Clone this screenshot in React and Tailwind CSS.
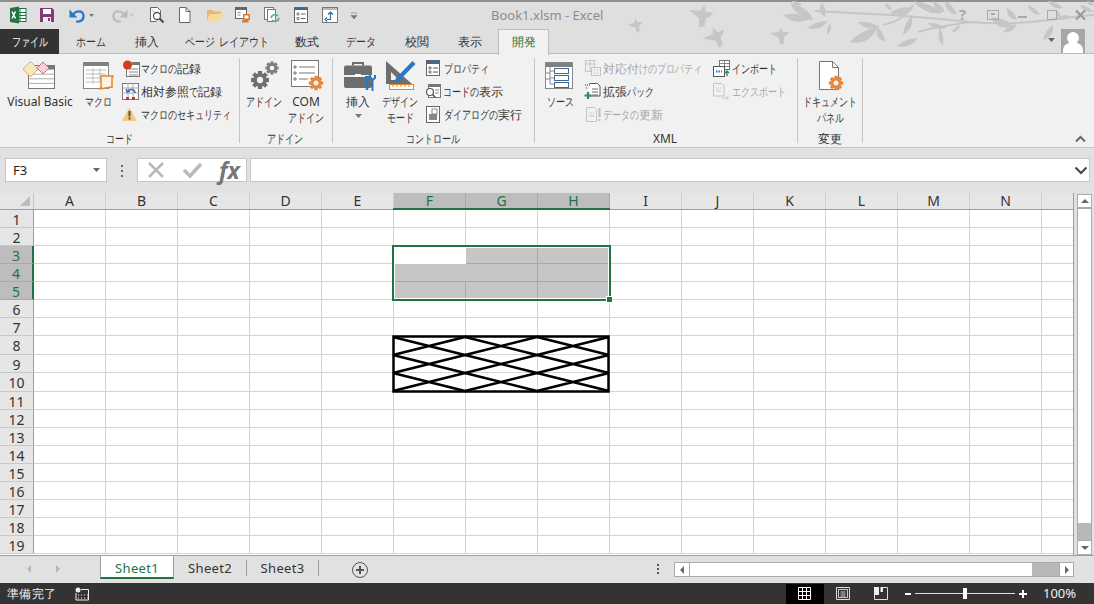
const jp = "font-['Noto_Sans_CJK_JP','Liberation_Sans',sans-serif]";
const columns = ['A', 'B', 'C', 'D', 'E', 'F', 'G', 'H', 'I', 'J', 'K', 'L', 'M', 'N', ''];
const rows = Array.from({ length: 19 }, (_, i) => i + 1);

const tabs = [
  { label: 'ホーム', pos: 'left-[59px] w-[64px]' },
  { label: '挿入', pos: 'left-[123px] w-[48px]' },
  { label: 'ページ レイアウト', pos: 'left-[171px] w-[112px]' },
  { label: '数式', pos: 'left-[283px] w-[48px]' },
  { label: 'データ', pos: 'left-[331px] w-[60px]' },
  { label: '校閲', pos: 'left-[393px] w-[48px]' },
  { label: '表示', pos: 'left-[446px] w-[48px]' },
];

const labels = [
  { t: 'Visual Basic', c: 'left-0 w-[80px] top-[94px] text-center font-["Open_Sans"]' },
  { t: 'マクロ', c: 'left-[78px] w-[40px] top-[94px] text-center' },
  { t: 'マクロの記録', c: 'left-[141px] top-[61px]' },
  { t: '相対参照で記録', c: 'left-[141px] top-[84px]' },
  { t: 'マクロのセキュリティ', c: 'left-[141px] top-[107px]' },
  { t: 'コード', c: 'left-[90px] w-[58px] top-[131px] text-center' },
  { t: 'アドイン', c: 'left-[240px] w-[48px] top-[94px] text-center' },
  { t: 'COM', c: 'left-[286px] w-[40px] top-[94px] text-center font-["Open_Sans"]' },
  { t: 'アドイン', c: 'left-[282px] w-[48px] top-[110px] text-center' },
  { t: 'アドイン', c: 'left-[261px] w-[48px] top-[131px] text-center' },
  { t: '挿入', c: 'left-[338px] w-[40px] top-[94px] text-center' },
  { t: 'デザイン', c: 'left-[376px] w-[48px] top-[94px] text-center' },
  { t: 'モード', c: 'left-[376px] w-[48px] top-[110px] text-center' },
  { t: 'プロパティ', c: 'left-[444px] top-[61px]' },
  { t: 'コードの表示', c: 'left-[443px] top-[84px]' },
  { t: 'ダイアログの実行', c: 'left-[444px] top-[107px]' },
  { t: 'コントロール', c: 'left-[393px] w-[80px] top-[131px] text-center' },
  { t: 'ソース', c: 'left-[540px] w-[40px] top-[94px] text-center' },
  { t: '対応付けのプロパティ', c: 'left-[603px] top-[61px] text-[#a6a6a6]' },
  { t: '拡張パック', c: 'left-[603px] top-[84px]' },
  { t: 'データの更新', c: 'left-[603px] top-[107px] text-[#a6a6a6]' },
  { t: 'XML', c: 'left-[645px] w-[40px] top-[131px] text-center font-["Open_Sans"]' },
  { t: 'インポート', c: 'left-[732px] top-[61px]' },
  { t: 'エクスポート', c: 'left-[732px] top-[84px] text-[#a6a6a6]' },
  { t: 'ドキュメント', c: 'left-[800px] w-[60px] top-[94px] text-center' },
  { t: 'パネル', c: 'left-[810px] w-[40px] top-[110px] text-center' },
  { t: '変更', c: 'left-[810px] w-[40px] top-[131px] text-center' },
];

const separators = ['left-[239px]', 'left-[332px]', 'left-[534px]', 'left-[797px]', 'left-[862px]'];

// tip to tip leaves: x1, y1, x2, y2, belly
const leaves = [
  [783, 15, 812, 18, 7], [790, 3, 810, 15, 6], [801, 7, 813, 20, 5], [822, 3, 825, 17, 5], [807, 28, 828, 21, 5],
  [827, 35, 830, 23, 3], [792, 1, 802, 5, 3], [885, 3, 892, 10, 3], [890, 13, 913, 8, 7], [903, 35, 912, 15, 5],
  [913, 1, 943, 13, 6], [933, 1, 945, 12, 5], [945, 1, 957, 15, 5], [927, 23, 947, 28, 4], [850, 42, 877, 28, 8],
  [858, 22, 880, 27, 5], [877, 27, 885, 42, 5], [897, 46, 918, 38, 5], [940, 28, 943, 46, 4], [952, 32, 960, 25, 3],
  [990, 17, 1015, 27, 7], [1007, 8, 1017, 20, 5], [1003, 32, 1017, 24, 4], [1028, 5, 1040, 15, 4], [1048, 1, 1063, 8, 4],
  [1043, 40, 1053, 25, 5], [1055, 18, 1070, 16, 4], [1080, 5, 1094, 12, 4], [1087, 1, 1094, 5, 3], [1057, 10, 1060, 18, 3],
];

function leafPath([x1, y1, x2, y2, b]) {
  const mx = (x1 + x2) / 2;
  const my = (y1 + y2) / 2;
  const len = Math.hypot(x2 - x1, y2 - y1);
  const nx = (-(y2 - y1) / len) * b * 1.5;
  const ny = ((x2 - x1) / len) * b * 1.5;
  return `M${x1} ${y1}Q${mx + nx} ${my + ny} ${x2} ${y2}Q${mx - nx * 0.5} ${my - ny * 0.5} ${x1} ${y1}z`;
}

// kana in the reference is much narrower than the kanji, so squeeze those runs
function Jp({ text, wide }) {
  const parts = text.split(/([\u3040-\u30ff]+)/);
  return parts.map((part, i) => {
    if (i % 2 === 0) return part;
    return (
      <span
        key={i}
        style={{ width: part.length * (wide ? 10 : 9) }}
        className={`inline-block origin-left whitespace-nowrap ${wide ? 'scale-x-[.83]' : 'scale-x-75'}`}
      >
        {part}
      </span>
    );
  });
}

function Gear({ x, y, r, fill = '#e8873a' }) {
  const teeth = [0, 45, 90, 135];
  return (
    <g transform={`translate(${x} ${y})`} fill={fill}>
      {teeth.map(a => (
        <rect key={a} x={-r * 0.28} y={-r * 1.2} width={r * 0.56} height={r * 2.4} transform={`rotate(${a})`} />
      ))}
      <circle r={r * 0.9} />
      <circle r={r * 0.42} fill="#f1f1f1" />
    </g>
  );
}

function Sheet({ x, y, w, h, stroke = '#777' }) {
  const lines = [];
  for (let i = 1; i < 5; i++) lines.push(<path key={i} d={`M${x} ${y + (h * i) / 5}H${x + w}`} stroke={stroke} strokeOpacity=".6" />);
  return <g fill="none"><rect x={x + 0.5} y={y + 0.5} width={w} height={h} fill="#fff" stroke={stroke} />{lines}</g>;
}

function QuickAccess() {
  return (
    <>
      <svg className="absolute left-[9px] top-[6px] w-[18px] h-[18px]" viewBox="0 0 18 18">
        <rect x="6" y="2.500" width="11" height="13" fill="#fff" stroke="#217346" />
        <path d="M11 3v12M6 6.500h11M6 9.500h11M6 12.500h11" stroke="#217346" />
        <path d="M1 2l9-1.500v17L1 16z" fill="#217346" />
        <path d="M3 5.500l3.500 7M6.500 5.500l-3.500 7" stroke="#fff" strokeWidth="1.500" />
      </svg>
      <svg className="absolute left-[39px] top-[7px] w-[16px] h-[16px]" viewBox="0 0 16 16">
        <path d="M1 1h12l2 2v12H1z" fill="#80397b" />
        <rect x="4" y="2" width="8" height="5" fill="#fff" />
        <rect x="4" y="10" width="8" height="5" fill="#f1e8f0" />
        <rect x="9" y="11" width="2" height="3" fill="#80397b" />
      </svg>
      <svg className="absolute left-[67px] top-[6px] w-[30px] h-[18px]" viewBox="0 0 30 18">
        <path d="M6 9.500C8 4 16 4 16.500 9.500S12 16 9 15.500" fill="none" stroke="#2b78c2" strokeWidth="2.200" />
        <path d="M2.500 3.500v8h8z" fill="#2b78c2" />
        <path d="M22 8h5l-2.500 3z" fill="#777" />
      </svg>
      <svg className="absolute left-[108px] top-[6px] w-[30px] h-[18px]" viewBox="0 0 30 18">
        <path d="M16 9.500C14 4 6 4 5.500 9.500S10 16 13 15.500" fill="none" stroke="#bcbcbc" strokeWidth="2.200" />
        <path d="M19.500 3.500v8h-8z" fill="#bcbcbc" />
        <path d="M21 8h5l-2.500 3z" fill="#c8c8c8" />
      </svg>
      <svg className="absolute left-[149px] top-[6px] w-[16px] h-[18px]" viewBox="0 0 16 18" fill="none">
        <path d="M1.500 1.500h7l3 3V9M1.500 1.500v14h6" fill="#fff" stroke="#666" />
        <circle cx="8" cy="10" r="3.500" fill="#fff" stroke="#555" strokeWidth="1.300" />
        <path d="M10.500 12.500l4 4" stroke="#444" strokeWidth="2" />
      </svg>
      <svg className="absolute left-[178px] top-[7px] w-[13px] h-[16px]" viewBox="0 0 13 16">
        <path d="M1.500 .5h6.500l4 4v11H1.500z" fill="#fff" stroke="#666" />
        <path d="M8 .5v4h4" fill="none" stroke="#666" />
      </svg>
      <svg className="absolute left-[206px] top-[8px] w-[17px] h-[14px]" viewBox="0 0 17 14">
        <path d="M1 2h5l1.500 1.500H15V13H1z" fill="#e7b871" />
        <path d="M1 13l2.500-7H17l-2 7z" fill="#f6d99f" />
      </svg>
      <svg className="absolute left-[234px] top-[6px] w-[18px] h-[18px]" viewBox="0 0 18 18">
        <rect x="1.500" y="1.500" width="11" height="11" fill="#fff" stroke="#666" />
        <rect x="2" y="2" width="10" height="2" fill="#666" />
        <path d="M3.500 6.500h3M3.500 9h3" stroke="#888" />
        <path d="M9 8h7v6h-1.500v2.500H8v-2h1z" fill="#e2762c" />
        <path d="M10.500 9.500h4v3h-4z" fill="#fff" />
      </svg>
      <svg className="absolute left-[263px] top-[6px] w-[18px] h-[18px]" viewBox="0 0 18 18" fill="none">
        <rect x="1.500" y="1.500" width="9" height="12" stroke="#777" fill="#fff" />
        <rect x="4.500" y="3.500" width="8" height="12" stroke="#777" fill="#fff" />
        <path d="M8 12a4 4 0 0 1 7-2M16 12a4 4 0 0 1-7 2" stroke="#5fae8a" strokeWidth="1.800" />
      </svg>
      <svg className="absolute left-[294px] top-[7px] w-[14px] h-[16px]" viewBox="0 0 14 16">
        <rect x=".5" y=".5" width="13" height="15" fill="#fff" stroke="#666" />
        <rect x="1" y="1" width="12" height="2" fill="#40688f" />
        <path d="M3 6h2v2H3zM3 10.500h2v2H3z" fill="none" stroke="#666" strokeWidth=".8" />
        <path d="M7 7h4.500M7 11.500h4.500" stroke="#666" />
      </svg>
      <svg className="absolute left-[322px] top-[7px] w-[16px] h-[16px]" viewBox="0 0 16 16">
        <rect x=".5" y=".5" width="15" height="15" fill="#fff" stroke="#777" />
        <path d="M1 1h14v2H1z" fill="#bbb" />
        <path d="M8.500 5v7.500H5M5 10.500l-2 2 2 2M11 7.500l-2.500-2.500-2.500 2.500" fill="none" stroke="#2b6ca8" strokeWidth="1.200" />
      </svg>
      <svg className="absolute left-[350px] top-[12px] w-[8px] h-[8px]" viewBox="0 0 8 8">
        <path d="M1 1h6M1 3.500h6l-3 3.500z" fill="#777" stroke="#777" strokeWidth=".6" />
      </svg>
    </>
  );
}

function Foliage() {
  return (
    <svg className="absolute left-[620px] top-0 w-[474px] h-[53px]" viewBox="620 0 474 53" fill="#c6c6c6">
      <path d="M815 11C850 13 870 14 890 15S950 20 970 22 1013 24 1040 21 1075 16 1094 15M918 32C930 28 950 25 970 22M883 25C895 22 905 18 913 5" fill="none" stroke="#c6c6c6" strokeWidth="1.800" />
      {leaves.map((l, i) => (
        <path key={i} d={leafPath(l)} />
      ))}
      {[[637, 24, -10, .8], [704, 14, 10, 1.3], [717, 35, -20, 1.2], [782, 34, 0, 1]].map(([x, y, r, s], i) => (
        <path key={i} transform={`translate(${x} ${y}) rotate(${r}) scale(${s})`} d="M-12-1L-3-2-1-7 1-2 7-2 5 1 2 3 2 9-2 11-3 4z" />
      ))}
      <g fill="none" stroke="#a9a9a9">
        <rect x="987.500" y="10.500" width="11" height="9" />
        <path d="M991 14h4" strokeWidth="2" />
        <path d="M1018 17h9" strokeWidth="2" />
        <rect x="1047.500" y="10.500" width="9" height="9" />
        <path d="M1076 10.500l9 9M1085 10.500l-9 9" stroke="#999" strokeWidth="2.200" />
      </g>
      <text x="959" y="20" fill="#a9a9a9" fontSize="15" fontWeight="700" fontFamily="Open Sans">?</text>
    </svg>
  );
}

function RibbonIcons() {
  return (
    <>
      <svg className="absolute left-[22px] top-[60px] w-[34px] h-[30px]" viewBox="0 0 34 30">
        <Sheet x={6} y={5} w={26} h={23} />
        <rect x="26" y="5" width="6.500" height="4" fill="#777" />
        <path d="M8.500 1.500L16 9l-7.500 8L1 9z" fill="#f8e6bc" stroke="#dcae66" />
        <path d="M21 2l6 6-6 6-6-6z" fill="#f8d0d6" stroke="#d46d83" />
      </svg>
      <svg className="absolute left-[82px] top-[61px] w-[33px] h-[30px]" viewBox="0 0 33 30">
        <rect x="1.500" y="1.500" width="25" height="26" fill="#fff" stroke="#888" />
        <rect x="1" y="1" width="26" height="4" fill="#808080" />
        <path d="M4 9h20M4 13h20M4 17h20M4 21h14M11 7v16M18 7v14" stroke="#bbb" />
        <path d="M19 15h12l-1 2v9l-13 2c2-1 3-2 2-3z" fill="#fff3e4" stroke="#e2862f" strokeWidth="1.500" />
      </svg>
      <svg className="absolute left-[122px] top-[60px] w-[18px] h-[17px]" viewBox="0 0 18 17">
        <rect x="4.500" y="2.500" width="13" height="14" fill="#fff" stroke="#777" />
        <rect x="10" y="2" width="8" height="3" fill="#777" />
        <path d="M7 9h9M7 12h9M7 15h9" stroke="#888" />
        <circle cx="5.500" cy="5" r="4.500" fill="#d23a24" />
      </svg>
      <svg className="absolute left-[122px] top-[83px] w-[17px] h-[17px]" viewBox="0 0 17 17">
        <rect x=".5" y=".5" width="16" height="16" fill="#fff" stroke="#777" />
        <path d="M.5 5h16M.5 10h16M6 0v17M11 0v17" stroke="#aaa" />
        <path d="M4 14h3v3H4zM10 14h3v3h-3z" fill="#c0392b" />
        <path d="M13 10c0-4-6-5-8-1M4 6l1 3 3-1" fill="none" stroke="#2b78c2" strokeWidth="1.400" />
      </svg>
      <svg className="absolute left-[122px] top-[107px] w-[15px] h-[14px]" viewBox="0 0 15 14">
        <path d="M7.500 .5L15 14H0z" fill="#f3ca7f" />
        <path d="M6.500 4h2v5.500h-2zM6.500 10.500h2v2h-2z" fill="#5a4a30" />
      </svg>
      <svg className="absolute left-[250px] top-[60px] w-[30px] h-[32px]" viewBox="0 0 30 32">
        <Gear x={10} y={20} r={7.500} fill="#6f6f6f" />
        <Gear x={22} y={8} r={5.500} fill="#7d7d7d" />
      </svg>
      <svg className="absolute left-[291px] top-[60px] w-[34px] h-[32px]" viewBox="0 0 34 32">
        <rect x=".5" y=".5" width="27" height="26" fill="#fff" stroke="#777" />
        <path d="M3 6h2v2H3zM3 12h2v2H3zM3 18h2v2H3z" fill="none" stroke="#777" />
        <path d="M8 7h16M8 13h16M8 19h9" stroke="#777" />
        <Gear x={25} y={23} r={6} />
      </svg>
      <svg className="absolute left-[344px] top-[62px] w-[32px] h-[30px]" viewBox="0 0 32 30">
        <path d="M9 3.500V1h10v2.500" fill="none" stroke="#6e6e6e" strokeWidth="2" />
        <path d="M2 3.500h24a2 2 0 0 1 2 2V13H0V5.500a2 2 0 0 1 2-2zM0 15h28v9a2 2 0 0 1-2 2H2a2 2 0 0 1-2-2z" fill="#6e6e6e" />
        <rect x="11" y="12" width="6" height="3" fill="#fff" />
        <path d="M23 17v11" stroke="#2b78c2" strokeWidth="2.500" />
        <path d="M21 14h4v4h-4z" fill="#2b78c2" />
        <path d="M28.500 18v11M26 13v3l2.500 2 2.500-2v-3" fill="none" stroke="#2b78c2" strokeWidth="2" />
      </svg>
      <svg className="absolute left-[385px] top-[60px] w-[32px] h-[30px]" viewBox="0 0 32 30">
        <path d="M1 1L27 24H1z" fill="#6e6e6e" />
        <path d="M6 12l8 8H6z" fill="#f1f1f1" />
        <path d="M27.500 1l3 3L14 21l-5 2 2-5z" fill="#2b78c2" />
        <rect x="4.500" y="24.500" width="24" height="5" fill="#fff" stroke="#e2862f" />
        <path d="M8 25v2M12 25v2M16 25v2M20 25v2M24 25v2" stroke="#e2862f" />
      </svg>
      <svg className="absolute left-[426px] top-[60px] w-[15px] h-[16px]" viewBox="0 0 15 16">
        <rect x=".5" y=".5" width="13" height="15" fill="#fff" stroke="#666" />
        <rect x="1" y="1" width="12" height="3" fill="#40688f" />
        <path d="M3 7h2v2H3zM3 11h2v2H3z" fill="none" stroke="#555" strokeWidth=".8" />
        <path d="M7 8h5M7 12h5" stroke="#555" />
      </svg>
      <svg className="absolute left-[425px] top-[84px] w-[16px] h-[15px]" viewBox="0 0 16 15">
        <rect x="3.500" y=".5" width="12" height="13" fill="#fff" stroke="#777" />
        <rect x="4" y="1" width="11" height="2" fill="#777" />
        <path d="M10 6h4M10 9h4" stroke="#888" />
        <circle cx="5" cy="8" r="3.500" fill="#fff" stroke="#555" strokeWidth="1.200" />
        <path d="M7.500 10.500l3 3" stroke="#555" strokeWidth="1.500" />
      </svg>
      <svg className="absolute left-[426px] top-[106px] w-[15px] h-[17px]" viewBox="0 0 15 17">
        <rect x=".5" y=".5" width="13" height="16" fill="#fff" stroke="#666" />
        <rect x="6" y="3" width="5" height="5" fill="#fff" stroke="#888" />
        <rect x="3" y="8" width="8" height="6" fill="#888" />
      </svg>
      <svg className="absolute left-[545px] top-[62px] w-[31px] h-[29px]" viewBox="0 0 31 29">
        <rect x=".5" y=".5" width="27" height="26" fill="#fff" stroke="#888" />
        <rect x="1" y="1" width="26" height="4" fill="#808080" />
        <path d="M5 5v17M5 9h5M5 16h5M5 22h5M1 11h4M1 17h4" stroke="#888" />
        <rect x="9.500" y="6.500" width="14" height="5" fill="#fff" stroke="#40688f" />
        <rect x="9.500" y="13.500" width="14" height="5" fill="#fff" stroke="#40688f" />
        <rect x="9.500" y="20.500" width="14" height="5" fill="#fff" stroke="#40688f" />
      </svg>
      <svg className="absolute left-[585px] top-[60px] w-[16px] h-[17px]" viewBox="0 0 16 17" fill="none" stroke="#c4c4c4">
        <rect x=".5" y=".5" width="9" height="11" />
        <path d="M.5 4h9M5 0v12" />
        <rect x="6.500" y="7.500" width="9" height="8" fill="#f1f1f1" />
        <path d="M9 10h1.500M12 10h1.500M9 13h1.500M12 13h1.500" />
      </svg>
      <svg className="absolute left-[584px] top-[83px] w-[17px] h-[17px]" viewBox="0 0 17 17">
        <path d="M5.500 .5h8l2.500 2.500v10H5.500" fill="#fff" stroke="#555" />
        <path d="M8 6h6M8 9h6M8 12h6" stroke="#666" />
        <path d="M1 2h5M2 5h2" stroke="#3f7fc0" strokeDasharray="1 1" strokeWidth="1.500" />
        <path d="M4 9v7M.5 12.500h7" stroke="#2e8b6a" strokeWidth="2.200" />
      </svg>
      <svg className="absolute left-[586px] top-[107px] w-[16px] h-[15px]" viewBox="0 0 16 15" fill="none">
        <path d="M.5.500h8l2 2v12H.5z" stroke="#c4c4c4" />
        <path d="M3 6h1M5 6h1M7 6h1M3 9h5" stroke="#bbb" />
        <path d="M13.500 1v9M13.500 12v2" stroke="#bdbdbd" strokeWidth="2" />
      </svg>
      <svg className="absolute left-[713px] top-[60px] w-[17px] h-[17px]" viewBox="0 0 17 17">
        <rect x="6.500" y=".5" width="10" height="9" fill="#fff" stroke="#777" />
        <path d="M7 3.500h9M7 6.500h9M11.500 1v8" stroke="#888" />
        <rect x=".5" y="6.500" width="11" height="10" fill="#fff" stroke="#555" />
        <path d="M3 11.500h6" stroke="#2b78c2" strokeWidth="2" strokeDasharray="1.500 1" />
        <path d="M14 16v-5M12 13l2-2 2 2" fill="none" stroke="#2e8b6a" strokeWidth="1.400" />
      </svg>
      <svg className="absolute left-[713px] top-[83px] w-[17px] h-[17px]" viewBox="0 0 17 17" fill="none" stroke="#c4c4c4">
        <path d="M.5.500h8l2.500 2.500v10H.5z" />
        <path d="M3 5h1M5 5h1M7 5h1M3 8h5" />
        <path d="M9 15h6M13.500 13l2 2-2 2" />
      </svg>
      <svg className="absolute left-[818px] top-[61px] w-[28px] h-[31px]" viewBox="0 0 28 31">
        <path d="M1.500 .5h13l6 6v22H1.500z" fill="#fff" stroke="#777" />
        <path d="M14.500 .5v6h6" fill="none" stroke="#777" />
        <Gear x={18} y={22} r={6} />
      </svg>
    </>
  );
}

function RowCell({ n }) {
  const active = n >= 3 && n <= 5;
  return (
    <div className={`w-[34px] shrink-0 flex items-center justify-center text-[14px] leading-[14px] pt-[2px] border-b border-r ${active ? 'bg-[#bdbdbd] text-[#217346] border-b-[#a8a8a8] border-r-[#217346] border-r-2' : 'bg-[#e6e6e6] text-[#333] border-b-[#c8c8c8] border-r-[#9e9e9e]'}`}>
      {n}
    </div>
  );
}

function Sheets() {
  return (
    <div className="absolute left-0 top-[193px] w-[1074px] h-[362px] overflow-hidden bg-white font-['Liberation_Sans']">
      <div className="relative flex h-[17px] bg-[#e6e6e6]">
        <div className="relative w-[34px] shrink-0 border-r border-[#c4c4c4]">
          <div className="absolute left-[20px] top-[3px] w-0 h-0 border-l-[10px] border-l-transparent border-b-[10px] border-b-[#bcbcbc]" />
        </div>
        {columns.map(c => {
          const active = c === 'F' || c === 'G' || c === 'H';
          return (
            <div key={c} className={`${c ? 'w-[72px]' : 'w-[32px]'} shrink-0 text-center text-[14px] leading-[14px] pt-[1px] border-r ${active ? 'bg-[#bdbdbd] text-[#217346] border-[#a8a8a8]' : 'text-[#333] border-[#cfcfcf]'}`}>
              {c}
            </div>
          );
        })}
        <div className="absolute inset-x-0 bottom-0 h-px bg-[#9e9e9e]" />
      </div>
      {rows.map(n => (
        <div key={n} className={`flex ${n === 8 || n === 10 ? 'h-[19px]' : 'h-[18px]'}`}>
          <RowCell n={n} />
          {columns.map(c => (
            <div key={c} className={`${c ? 'w-[72px]' : 'w-[32px]'} shrink-0 border-r border-b border-[#d4d4d4]`} />
          ))}
        </div>
      ))}
      <div className="absolute left-[393px] top-[15px] w-[217px] h-[2px] bg-[#217346]" />
      <div className="absolute left-[392px] top-[52px] w-[219px] h-[56px] border-2 border-[#217346]">
        <div className="absolute inset-0 border border-white bg-[#c6c6c6] grid grid-cols-[71px_72px_1fr] grid-rows-[16px_18px_1fr]">
          <div className="bg-white" />
          {[0, 1, 2, 3, 4, 5, 6, 7].map(i => (
            <div key={i} className={`border-[#a8a8a8] ${i === 0 || i === 3 ? 'border-r' : ''} ${i < 5 ? 'border-b' : ''} ${i === 6 ? 'border-r' : ''} ${i === 5 ? 'border-r' : ''}`} />
          ))}
        </div>
      </div>
      <div className="absolute left-[606px] top-[103px] w-[7px] h-[7px] bg-[#217346] border border-white" />
      <svg className="absolute left-[392px] top-[142px] w-[218px] h-[58px]" viewBox="0 0 218 58">
        <g stroke="#000" strokeWidth="2.500" fill="none">
          <path d="M1 2L73 20M73 2L1 20M73 2L145 20M145 2L73 20M145 2L217 20M217 2L145 20" />
          <path d="M1 20L73 38M73 20L1 38M73 20L145 38M145 20L73 38M145 20L217 38M217 20L145 38" />
          <path d="M1 38L73 56M73 38L1 56M73 38L145 56M145 38L73 56M145 38L217 56M217 38L145 56" />
        </g>
        <rect x="1.500" y="1.500" width="215" height="55" fill="none" stroke="#000" strokeWidth="2.500" />
      </svg>
    </div>
  );
}

export default function App() {
  return (
    <div className={`relative w-[1094px] h-[604px] overflow-hidden bg-[#e1e1e1] text-[12px] text-[#333] ${jp}`}>
      {/* title bar + tabs */}
      <div className="absolute inset-x-0 top-0 h-[54px] bg-[#dfdfdf] border-t-2 border-[#8f8f8f] border-b border-b-[#bdbdbd]" />
      <Foliage />
      <QuickAccess />
      <div className="absolute left-[491px] top-[6px] text-[13px] leading-[18px] text-[#8c8c8c] font-['Open_Sans']">Book1.xlsm - Excel</div>
      <div className="absolute left-0 top-[29px] w-[59px] h-[25px] bg-[#333] text-white text-center leading-[25px]"><Jp text="ファイル" /></div>
      {tabs.map(tab => (
        <div key={tab.label} className={`absolute top-[29px] h-[25px] leading-[25px] text-center ${tab.pos}`}><Jp text={tab.label} wide /></div>
      ))}
      <div className="absolute left-[498px] top-[29px] w-[51px] h-[26px] z-10 bg-[#f1f1f1] border border-b-0 border-[#bdbdbd] text-[#217346] text-center leading-[24px]">開発</div>
      <svg className="absolute left-[1047px] top-[37px] w-[9px] h-[6px]" viewBox="0 0 9 6"><path d="M1 1h7L4.500 5z" fill="#666" /></svg>
      <div className="absolute left-[1061px] top-[29px] w-[24px] h-[24px] bg-[#a6a6a6] overflow-hidden">
        <div className="absolute left-[6px] top-[3px] w-[12px] h-[12px] rounded-full bg-white" />
        <div className="absolute left-[2px] top-[14px] w-[20px] h-[12px] rounded-t-[7px] bg-white" />
      </div>

      {/* ribbon */}
      <div className="absolute inset-x-0 top-[54px] h-[94px] bg-[#f1f1f1] border-b border-[#c6c6c6]" />
      {separators.map(pos => (
        <div key={pos} className={`absolute top-[58px] w-px h-[85px] bg-[#c6c6c6] ${pos}`} />
      ))}
      <RibbonIcons />
      {labels.map((l, i) => (
        <div key={i} className={`absolute leading-[16px] whitespace-nowrap ${l.c}`}><Jp text={l.t} /></div>
      ))}
      <svg className="absolute left-[355px] top-[114px] w-[8px] h-[5px]" viewBox="0 0 8 5"><path d="M0 0h7L3.500 4z" fill="#777" /></svg>
      <svg className="absolute left-[1075px] top-[135px] w-[11px] h-[8px]" viewBox="0 0 11 8"><path d="M1 6.500L5.500 2 10 6.500" fill="none" stroke="#666" strokeWidth="2" /></svg>

      {/* formula bar */}
      <div className="absolute left-[5px] top-[158px] w-[102px] h-[24px] bg-white border border-[#c6c6c6] pl-[7px] leading-[22px] font-['Liberation_Sans'] text-[13px] text-[#222]">F3</div>
      <svg className="absolute left-[92px] top-[167px] w-[9px] h-[6px]" viewBox="0 0 9 6"><path d="M1 1h7L4.500 5z" fill="#666" /></svg>
      <div className="absolute left-[121px] top-[165px] flex flex-col gap-[3px]">
        <div className="w-[2px] h-[2px] bg-[#666]" />
        <div className="w-[2px] h-[2px] bg-[#666]" />
        <div className="w-[2px] h-[2px] bg-[#666]" />
      </div>
      <div className="absolute left-[137px] top-[158px] w-[110px] h-[24px] bg-white border border-[#c6c6c6]" />
      <svg className="absolute left-[147px] top-[161px] w-[18px] h-[18px]" viewBox="0 0 18 18"><path d="M2 2l14 14M16 2L2 16" stroke="#b9b9b9" strokeWidth="2.500" /></svg>
      <svg className="absolute left-[182px] top-[161px] w-[21px] h-[18px]" viewBox="0 0 21 18"><path d="M2 9l6 6L19 3" fill="none" stroke="#b9b9b9" strokeWidth="3.500" /></svg>
      <div className="absolute left-[219px] top-[157px] text-[23px] leading-[26px] italic font-bold text-[#777] font-['Liberation_Serif']">fx</div>
      <div className="absolute left-[250px] top-[158px] w-[840px] h-[24px] bg-white border border-[#c6c6c6]" />
      <svg className="absolute left-[1074px] top-[166px] w-[14px] h-[9px]" viewBox="0 0 14 9"><path d="M1.500 1.500L7 7l5.500-5.500" fill="none" stroke="#444" strokeWidth="2" /></svg>

      <Sheets />

      {/* vertical scrollbar */}
      <div className="absolute left-[1073px] top-[193px] w-px h-[362px] bg-[#9e9e9e]" />
      <div className="absolute left-[1077px] top-[194px] w-[15px] h-[361px] bg-[#b8b8b8] border border-[#ababab] flex flex-col">
        <div className="h-[14px] bg-white border-b-2 border-[#ababab] flex items-center justify-center">
          <div className="w-0 h-0 border-x-[4px] border-x-transparent border-b-[4px] border-b-[#666]" />
        </div>
        <div className="h-[314px] bg-white" />
        <div className="mt-auto h-[14px] bg-white border-t border-[#ababab] flex items-center justify-center">
          <div className="w-0 h-0 border-x-[4px] border-x-transparent border-t-[4px] border-t-[#666]" />
        </div>
      </div>

      {/* sheet tabs */}
      <div className="absolute inset-x-0 top-[555px] h-[28px] bg-[#e1e1e1] border-t border-[#9e9e9e] font-['Liberation_Sans'] text-[13px] tracking-[0.3px]">
        <div className="absolute left-[27px] top-[9px] w-0 h-0 border-y-[4px] border-y-transparent border-r-[4px] border-r-[#b5b5b5]" />
        <div className="absolute left-[56px] top-[9px] w-0 h-0 border-y-[4px] border-y-transparent border-l-[4px] border-l-[#b5b5b5]" />
        <div className="absolute left-[100px] -top-px w-[74px] h-[24px] bg-white border-x border-t border-[#9e9e9e] border-b-2 border-b-[#217346] text-[#217346] text-center leading-[24px]">Sheet1</div>
        <div className="absolute left-[174px] top-[4px] w-[73px] h-[16px] border-r border-[#9e9e9e] text-center leading-[16px]">Sheet2</div>
        <div className="absolute left-[247px] top-[4px] w-[72px] h-[16px] border-r border-[#9e9e9e] text-center leading-[16px]">Sheet3</div>
        <svg className="absolute left-[351px] top-[5px] w-[18px] h-[18px]" viewBox="0 0 18 18" fill="none" stroke="#555"><circle cx="9" cy="9" r="7.500" /><path d="M5 9h8M9 5v8" strokeWidth="2" /></svg>
        <div className="absolute left-[657px] top-[8px] flex flex-col gap-[2px]">
          <div className="w-[2px] h-[2px] bg-[#555]" />
          <div className="w-[2px] h-[2px] bg-[#555]" />
          <div className="w-[2px] h-[2px] bg-[#555]" />
        </div>
        <div className="absolute left-[674px] top-[6px] w-[400px] h-[15px] bg-[#b8b8b8] border border-[#ababab] flex">
          <div className="w-[15px] bg-white border-r border-[#ababab] flex items-center justify-center">
            <div className="w-0 h-0 border-y-[4px] border-y-transparent border-r-[4px] border-r-[#666]" />
          </div>
          <div className="w-[342px] bg-white" />
          <div className="ml-auto w-[14px] bg-white border-l border-[#ababab] flex items-center justify-center">
            <div className="w-0 h-0 border-y-[4px] border-y-transparent border-l-[4px] border-l-[#666]" />
          </div>
        </div>
      </div>

      {/* status bar */}
      <div className="absolute inset-x-0 top-[583px] h-[21px] bg-[#333] text-[#f1f1f1]">
        <div className="absolute left-[7px] top-[3px] leading-[16px] tracking-[0.3px]">準備完了</div>
        <svg className="absolute left-[75px] top-[4px] w-[14px] h-[14px]" viewBox="0 0 14 14" fill="none" stroke="#eee">
          <circle cx="3" cy="3" r="2.500" fill="#eee" stroke="none" />
          <path d="M6 2.500h7.500v10.500H1V6M3 8h1M6 8h1M9 8h1M12 8h1M3 11h1M6 11h1M9 11h1M12 11h1" />
        </svg>
        <div className="absolute left-[786px] top-px w-[38px] h-[20px] bg-black" />
        <svg className="absolute left-[798px] top-[4px] w-[13px] h-[13px]" viewBox="0 0 13 13" fill="none" stroke="#fff"><path d="M.5.500h12v12H.5zM.5 4.500h12M.5 8.500h12M4.500.500v12M8.500.500v12" /></svg>
        <svg className="absolute left-[836px] top-[4px] w-[14px] h-[13px]" viewBox="0 0 14 13" fill="none" stroke="#ddd"><path d="M.5.500h13v12H.5z" /><path d="M2.500 2.500h9v8h-9zM4.500 5h5M4.500 7h5M4.500 9h5" strokeWidth=".9" /></svg>
        <svg className="absolute left-[874px] top-[4px] w-[14px] h-[13px]" viewBox="0 0 14 13"><path d="M.5 7v5.500h13V.5H9" fill="none" stroke="#ddd" /><path d="M0 0h5v8H0zM6.500 0H9v5H6.500z" fill="#eee" /></svg>
        <div className="absolute left-[905px] top-[10px] w-[6px] h-[2px] bg-white" />
        <div className="absolute left-[915px] top-[10px] w-[100px] h-px bg-[#ddd]" />
        <div className="absolute left-[963px] top-[5px] w-[4px] h-[11px] bg-white" />
        <div className="absolute left-[1019px] top-[10px] w-[8px] h-[2px] bg-white" />
        <div className="absolute left-[1022px] top-[7px] w-[2px] h-[8px] bg-white" />
        <div className="absolute left-[1043px] top-[2px] text-[13px] leading-[17px] font-['Open_Sans']">100%</div>
      </div>
    </div>
  );
}
